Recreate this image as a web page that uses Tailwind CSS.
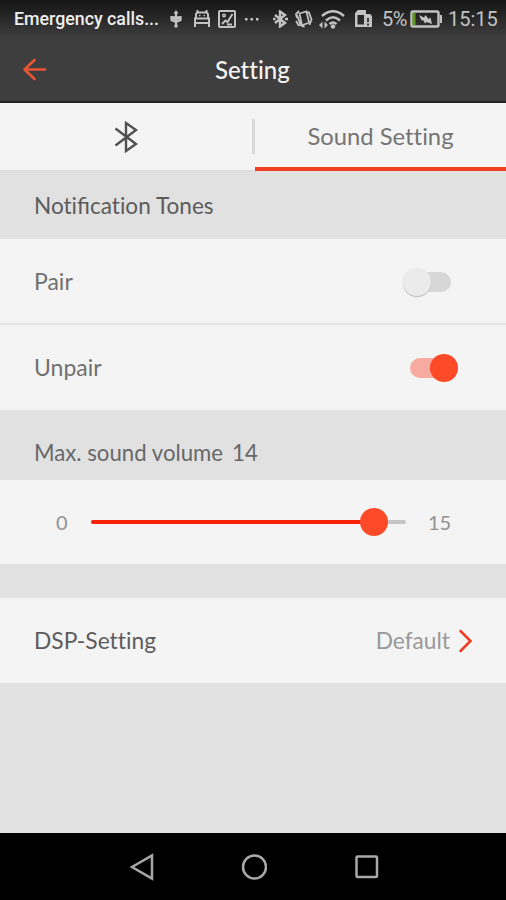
<!DOCTYPE html>
<html lang="en">
<head>
  <meta charset="UTF-8" />
  <meta name="viewport" content="width=device-width, initial-scale=1" />
  <title>Sound Setting</title>
  <script src="https://cdn.jsdelivr.net/npm/@tailwindcss/browser@4"></script>
</head>
<body class="bg-[#e1e1e1] w-[506px] h-[900px] flex flex-col overflow-hidden font-['Lato',sans-serif] [font-variant-ligatures:none] text-[#5c5c5c] text-[23px] leading-none whitespace-nowrap">
  <header class="h-[103px] shrink-0 bg-linear-to-b from-[#151515] to-[#3e3e3e] to-[38px] border-b-2 border-[#242424]">
    <!-- Status bar -->
    <div class="h-[38px] flex items-center text-[#c2c2c2] font-['Roboto',sans-serif]">
      <span class="w-[145px] ml-[14px] text-[17.800px] font-medium text-[#eeeeee]">Emergency calls...</span>
      <svg class="w-[14px] h-[18px] ml-[10px]" viewBox="0 0 14 18" fill="none" stroke="currentColor" stroke-width="2.200"><path d="M7 2v14M2.500 6v4L7 12l4.500-2V6" /><path d="M7 0l2.500 3.500h-5z" fill="currentColor" stroke="none" /><circle cx="7" cy="16" r="1.800" fill="currentColor" stroke="none" /><path d="M2 8h10" stroke-width="3.500" /></svg>
      <svg class="w-[18px] h-[18px] ml-[10px]" viewBox="0 0 18 18" fill="none" stroke="currentColor" stroke-width="2"><path d="M3 7.500V5q0-2.500 2-2.500h8q2 0 2 2.500v2.500M1 8.500h16M1 13h16M2 8v9M16 8v9M4 0l1.500 3M14 0l-1.500 3" /><path d="M6 5.500h1.500M10.500 5.500H12" stroke-width="1.500" /></svg>
      <svg class="w-[18px] h-[18px] ml-[7px]" viewBox="0 0 18 18" fill="none" stroke="currentColor" stroke-width="2"><rect x="1" y="1" width="16" height="16" rx="1" /><path d="M4 14l3.500-3.500L9.500 12l5-8M9 14.500h5" /><circle cx="6" cy="5.500" r="1.300" stroke-width="1.500" /></svg>
      <svg class="w-[16px] h-[4px] ml-[8px]" viewBox="0 0 16 4" fill="currentColor"><rect x="1" y="1" width="2.500" height="2.500" /><rect x="6.500" y="1" width="2.500" height="2.500" /><rect x="12" y="1" width="2.500" height="2.500" /></svg>
      <svg class="w-[15px] h-[18px] ml-[13px]" viewBox="0 0 15 18" fill="none" stroke="currentColor" stroke-width="2.400"><path d="M2 5l10 8-5 3.500v-15L12 5 2 13M0 9h2.500M12 9h3" /></svg>
      <svg class="w-[18px] h-[18px] ml-[7px]" viewBox="0 0 18 18" fill="none" stroke="currentColor" stroke-width="1.800"><path d="M4.500 3.500l7-2 2.500 11-7 3zM2 5l3.500 10 4 2M4 1L1 4l1 4M11 1.500l3 1 2.500 7-2 5.500M1 11l3 5" /></svg>
      <svg class="w-[27px] h-[19px] ml-[6px]" viewBox="0 0 27 19" fill="none" stroke="currentColor" stroke-width="2.400"><path d="M3 6q11-9.500 22 0M7 10.500q7-6.500 14 0M10.500 14q3.500-3 7 0" /><circle cx="14" cy="16.500" r="2.200" fill="currentColor" stroke="none" /><path d="M0 15l3.500-3.500v7zM9 15l-3.500-3.500v7z" fill="currentColor" stroke="none" /></svg>
      <svg class="w-[19px] h-[18px] ml-[8px]" viewBox="0 0 19 18" fill="currentColor"><path fill-rule="evenodd" d="M1 3l3-3h8v4h4l2 2v11H1zM3.500 5v9.500H10V5z" /><path d="M14 8v4M14 13.500v2" stroke="#2e2e2e" stroke-width="1.800" /></svg>
      <span class="w-[27px] ml-[9px] text-[20px] tracking-[-0.6px]">5%</span>
      <svg class="w-[33px] h-[18px] ml-[1px]" viewBox="0 0 33 18"><rect x="1.500" y="1.500" width="27" height="15" rx="1.500" fill="none" stroke="currentColor" stroke-width="2.400" /><path d="M30 5h2v8h-2z" fill="currentColor" /><rect x="2.500" y="3" width="3" height="12" fill="#5f9b22" /><path d="M9 5l5 2.500L15.500 5l3 4 2-1.500L22 14l-5.500-2-1.500 1.500-2-3.500-1.500.5z" fill="currentColor" /></svg>
      <span class="ml-[5px] text-[20px]">15:15</span>
    </div>
    <div class="h-[62px] flex items-center">
      <svg class="w-[26px] h-[24px] ml-[22px]" viewBox="0 0 26 24" fill="none" stroke="#ea5434" stroke-width="2.600" stroke-linecap="round" stroke-linejoin="round"><path d="M12.500 3L2.500 12.500l10 9.500M3 12.500h20" /></svg>
      <h1 class="w-[80px] ml-[167px] pt-px text-[24px] font-medium text-[#f4f4f4]">Setting</h1>
    </div>
  </header>

  <!-- Tabs -->
  <nav class="h-[68px] shrink-0 flex bg-[#f4f4f4] border-b border-[#dcdcdc]">
    <div class="w-[252px] flex items-center justify-center">
      <svg class="w-[24px] h-[32px]" viewBox="0 0 24 32" fill="none" stroke="#505050" stroke-width="2.400"><path d="M1.500 7.500L22 23l-10 7V2l10 7L1.500 24.500" /></svg>
    </div>
    <div class="w-[3px] h-[35px] mt-[16px] bg-[#dadada]"></div>
    <div class="flex-1 h-[68px] pt-[3px] flex items-center justify-center border-b-4 border-[#ef3f20]">
      <span class="text-[23.800px] text-[#747474]">Sound Setting</span>
    </div>
  </nav>

  <h2 class="h-[68px] shrink-0 pl-[34px] pt-[3px] flex items-center text-[22.600px]">Noti<span class="[font-variant-ligatures:normal]">fi</span>cation Tones</h2>

  <div class="h-[86px] shrink-0 px-[34px] pt-px flex items-center justify-between bg-[#f4f4f4] border-b-2 border-[#e4e4e4]">
    <span class="text-[#707070]">Pair</span>
    <div class="w-[48px] h-[20px] mr-[21px] relative">
      <div class="absolute left-[8px] w-[40px] h-[20px] rounded-full bg-[#d7d7d7]"></div>
      <div class="absolute -top-[4px] left-0 size-[28px] rounded-full bg-[#ebebeb] shadow-[0_1px_1px_#b8b8b8]"></div>
    </div>
  </div>
  <div class="h-[85px] shrink-0 px-[34px] flex items-center justify-between bg-[#f4f4f4]">
    <span class="text-[#707070]">Unpair</span>
    <div class="w-[48px] h-[20px] mr-[14px] relative">
      <div class="w-[40px] h-[20px] rounded-full bg-[#f7aa9f]"></div>
      <div class="absolute -top-[4px] right-0 size-[28px] rounded-full bg-[#fc4a28]"></div>
    </div>
  </div>

  <h2 class="h-[70px] shrink-0 pl-[34px] pt-[16px] flex items-center text-[22.200px] text-[#686868]">Max. sound volume<span class="ml-[9px]">14</span></h2>

  <div class="h-[84px] shrink-0 flex items-center bg-[#f4f4f4] text-[20px] text-[#929292]">
    <span class="w-[35px] ml-[56px]">0</span>
    <div class="w-[315px] h-[4px] rounded-full bg-[#c4c4c4] relative">
      <div class="w-[283px] h-[4px] rounded-full bg-[#f82208]"></div>
      <div class="absolute -top-[12px] left-[269px] size-[28px] rounded-full bg-[#fc4a28]"></div>
    </div>
    <span class="ml-[22px]">15</span>
  </div>

  <div class="h-[85px] shrink-0 mt-[34px] pl-[34px] pr-[33px] flex items-center bg-[#f4f4f4]">
    <span class="text-[22.800px]">DSP-Setting</span>
    <span class="ml-auto pt-[2px] text-[22.700px] text-[#999999]">Default</span>
    <svg class="w-[15px] h-[24px] ml-[8px]" viewBox="0 0 15 24" fill="none" stroke="#f03c20" stroke-width="2.500" stroke-linecap="round"><path d="M2.500 2L12.500 12l-10 10" /></svg>
  </div>

  <!-- System navigation -->
  <footer class="h-[67px] shrink-0 mt-auto pl-[129px] flex items-center bg-black">
    <svg class="w-[26px] h-[28px]" viewBox="0 0 26 28" fill="none" stroke="#a8a8a8" stroke-width="2.500"><path d="M3 14L23 2.500v23z" /></svg>
    <svg class="w-[28px] h-[28px] ml-[84px] mr-[86px]" viewBox="0 0 28 28" fill="none" stroke="#a8a8a8" stroke-width="2.500"><circle cx="15.500" cy="14" r="11.500" /></svg>
    <svg class="w-[26px] h-[26px]" viewBox="0 0 26 26" fill="none" stroke="#a8a8a8" stroke-width="2.500"><rect x="3.500" y="2.500" width="20.500" height="20.500" rx="1" /></svg>
  </footer>
</body>
</html>
